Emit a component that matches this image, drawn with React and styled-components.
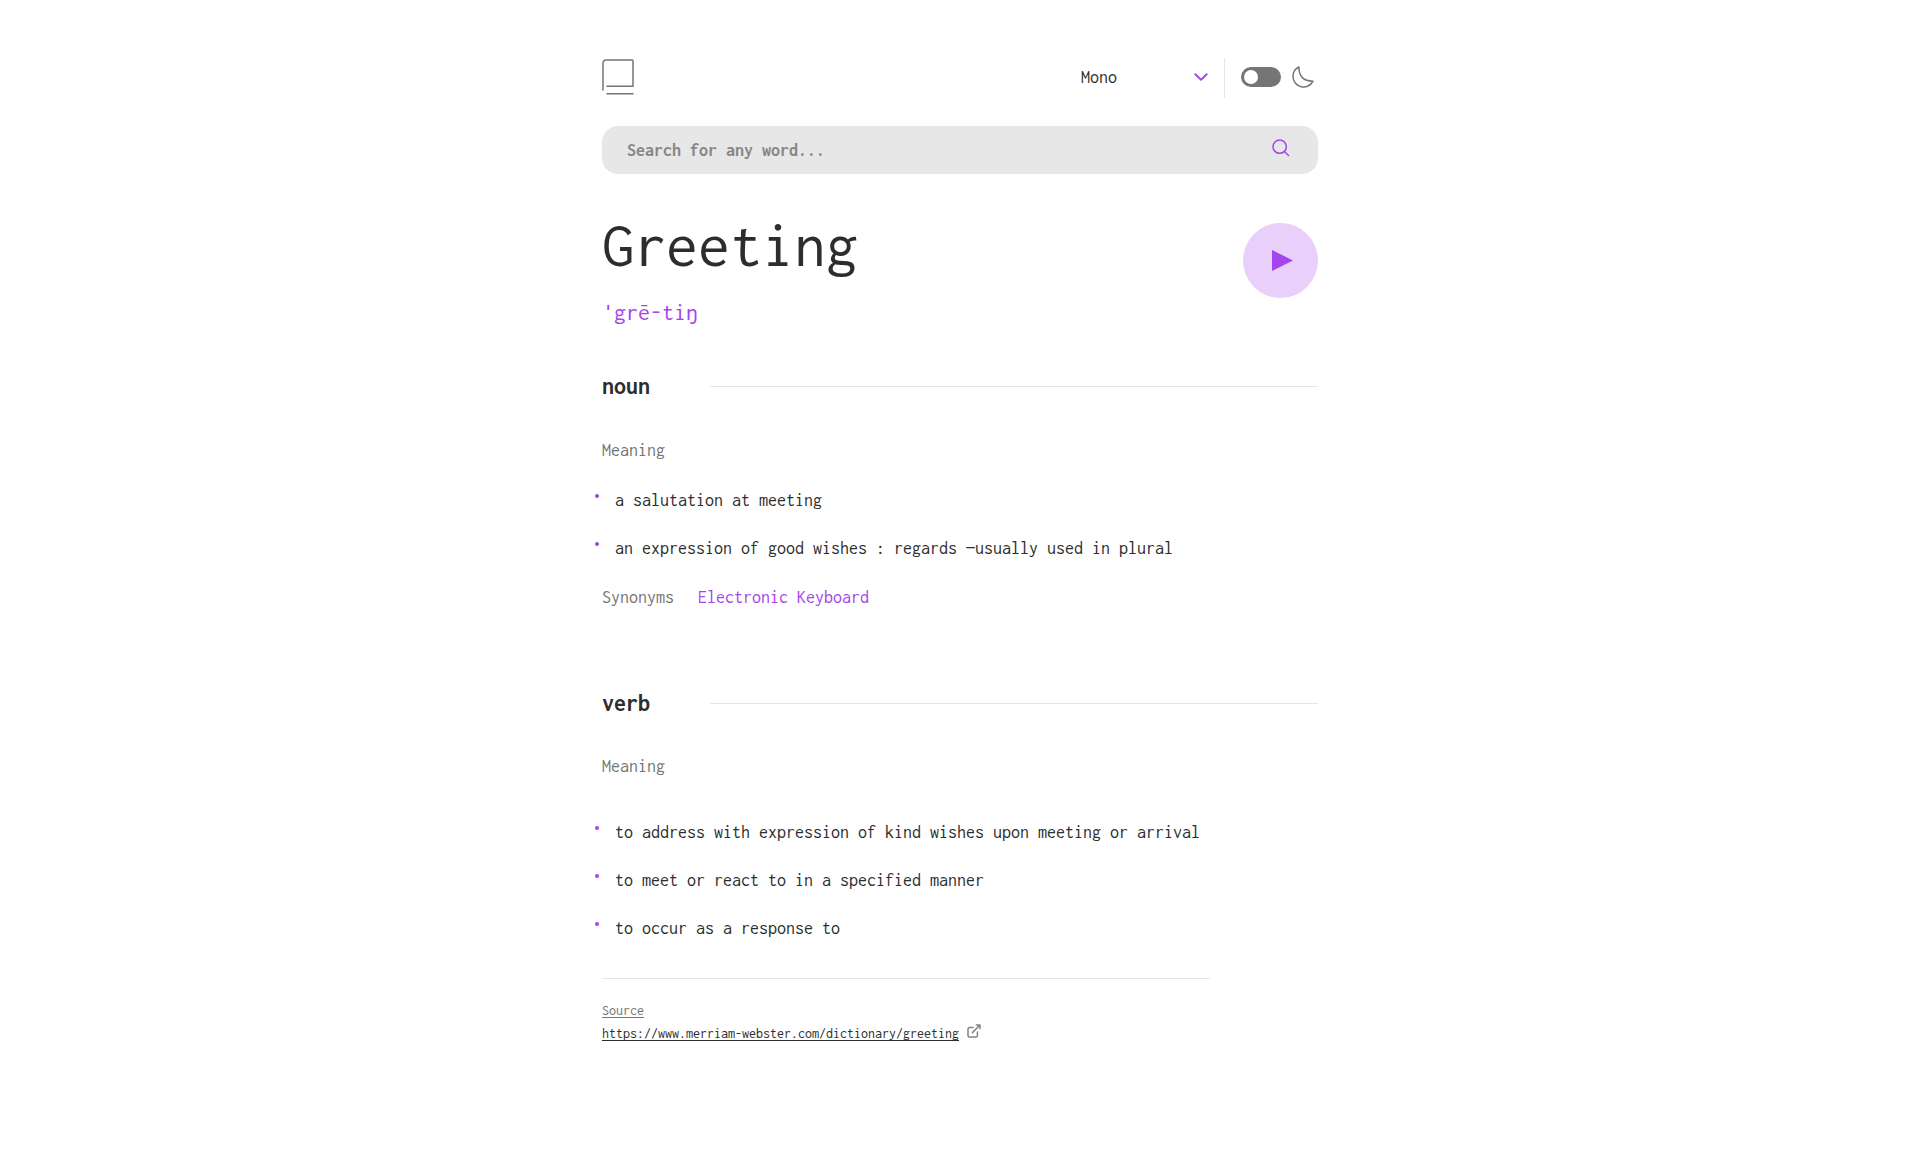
import React, { useState } from "react";
import styled, { createGlobalStyle } from "styled-components";

const GlobalStyle = createGlobalStyle`
  *, *::before, *::after { box-sizing: border-box; }
  body {
    margin: 0;
    background: #fff;
    color: #2d2d2d;
    font-family: Inconsolata, "Noto Sans Mono CJK SC", "Liberation Mono", monospace;
    font-size: 18px;
    line-height: 18px;
  }
  h1, h2, h3, p, ul { margin: 0; padding: 0; font-weight: 400; }
`;

const Page = styled.main`
  width: 716px;
  margin: 0 auto;
  padding: 58px 0 100px;
`;

const Header = styled.header`
  display: flex;
  justify-content: space-between;
  height: 40px;
`;

const LogoBox = styled.div`
  padding-top: 1px;
`;

const Controls = styled.div`
  display: flex;
  height: 38px;
  align-items: center;
  padding-right: 4px;
`;

const FontSelect = styled.button`
  display: flex;
  align-items: center;
  justify-content: space-between;
  width: 127px;
  padding: 0;
  border: 0;
  background: none;
  color: inherit;
  font: inherit;
`;

const Divider = styled.span`
  width: 1px;
  height: 40px;
  align-self: flex-start;
  margin: 0 16px;
  background: #e5e5e5;
`;

const Toggle = styled.button`
  display: flex;
  align-items: center;
  justify-content: ${(p) => (p.$on ? "flex-end" : "flex-start")};
  width: 40px;
  height: 20px;
  margin-right: 11px;
  padding: 0 3px;
  border: 0;
  border-radius: 10px;
  background: ${(p) => (p.$on ? "#a445ed" : "#757575")};
`;

const Knob = styled.span`
  width: 14px;
  height: 14px;
  border-radius: 50%;
  background: #fff;
`;

const SearchBar = styled.form`
  display: flex;
  height: 48px;
  margin-top: 28px;
  padding: 0 28px 0 25px;
  border-radius: 16px;
  background: #e7e7e7;
`;

const SearchInput = styled.input`
  flex: 1;
  padding: 0;
  border: 0;
  outline: 0;
  background: none;
  color: #2d2d2d;
  font: inherit;
  font-weight: 700;
  &::placeholder { color: #868686; opacity: 1; }
`;

const SearchButton = styled.button`
  display: flex;
  align-self: flex-start;
  margin-top: 13px;
  padding: 0;
  border: 0;
  background: none;
`;

const WordRow = styled.section`
  display: flex;
  justify-content: space-between;
  align-items: flex-start;
  margin-top: 37px;
`;

const Word = styled.h1`
  && { font-size: 64px; line-height: 67px; }
`;

const Phonetic = styled.p`
  && { margin-top: 21px; }
  color: #a445ed;
  font-size: 24px;
  line-height: 26px;
`;

const PlayButton = styled.button`
  display: flex;
  margin-top: 12px;
  padding: 0;
  border: 0;
  background: none;
`;

const Entry = styled.section`
  margin-top: ${(p) => p.$top}px;
`;

const PartRow = styled.div`
  display: flex;
  align-items: center;
  height: 26px;
`;

const Part = styled.h2`
  && { width: 108px; font-size: 24px; line-height: 26px; font-weight: 700; }
`;

const Rule = styled.span`
  flex: 1;
  height: 1px;
  background: #e5e5e5;
`;

const Label = styled.h3`
  && { margin-top: ${(p) => p.$top || 0}px; font-size: 18px; }
  color: #757575;
`;

const Meanings = styled.ul`
  && { margin: ${(p) => p.$top}px 0 0 -7px; }
  display: flex;
  flex-direction: column;
  gap: 30px;
  list-style: none;
`;

const Meaning = styled.li`
  display: flex;
  gap: 16px;
  &::before {
    content: "";
    width: 4px;
    height: 4px;
    margin-top: 3px;
    border-radius: 50%;
    background: #a445ed;
  }
`;

const Synonyms = styled.div`
  display: flex;
  gap: 24px;
  margin-top: 31px;
`;

const Synonym = styled.span`
  color: #a445ed;
`;

const Footer = styled.footer`
  width: 608px;
  margin-top: 41px;
  padding-top: 25px;
  border-top: 1px solid #e5e5e5;
  font-size: 14px;
  line-height: 14px;
  text-underline-offset: 2px;
`;

const SourceLabel = styled.p`
  color: #757575;
  text-decoration: underline;
`;

const SourceRow = styled.div`
  display: flex;
  align-items: flex-start;
  gap: 8px;
  margin-top: 6px;
`;

const SourceLink = styled.a`
  margin-top: 3px;
  color: #2d2d2d;
  text-decoration: underline;
`;

const Icon = styled.svg`
  display: block;
  flex: none;
  overflow: visible;
  fill: none;
  stroke: ${(p) => p.$color};
  stroke-width: ${(p) => p.$weight || 1.5};
  stroke-linecap: round;
  stroke-linejoin: round;
`;

const entries = [
  {
    part: "noun",
    top: 48,
    labelTop: 42,
    listTop: 32,
    meanings: [
      "a salutation at meeting",
      "an expression of good wishes : regards —usually used in plural",
    ],
    synonyms: "Electronic Keyboard",
  },
  {
    part: "verb",
    top: 84,
    labelTop: 41,
    listTop: 48,
    meanings: [
      "to address with expression of kind wishes upon meeting or arrival",
      "to meet or react to in a specified manner",
      "to occur as a response to",
    ],
  },
];

export default function App() {
  const [dark, setDark] = useState(false);
  return (
    <>
      <GlobalStyle />
      <Page>
        <Header>
          <LogoBox>
            <Icon $color="#757575" width="32" height="36" viewBox="0 0 32 36">
              <path d="M1 31V4a3 3 0 0 1 3-3h26a1 1 0 0 1 1 1v25.2H5M5 34.8h26" />
            </Icon>
          </LogoBox>
          <Controls>
            <FontSelect type="button">
              Mono
              <Icon $color="#a445ed" $weight={1.9} width="14" height="8" viewBox="0 0 14 8">
                <path d="m1.3 1.2 5.7 5.6 5.7-5.6" />
              </Icon>
            </FontSelect>
            <Divider />
            <Toggle type="button" $on={dark} onClick={() => setDark(!dark)}>
              <Knob />
            </Toggle>
            <Icon $color="#757575" width="22" height="22" viewBox="0 0 22 22">
              <path d="M1 10.449a10.544 10.544 0 0 0 19.993 4.686C11.544 15.135 6.858 10.448 6.858 1A10.545 10.545 0 0 0 1 10.449Z" />
            </Icon>
          </Controls>
        </Header>

        <SearchBar onSubmit={(e) => e.preventDefault()}>
          <SearchInput placeholder="Search for any word..." />
          <SearchButton type="submit">
            <Icon $color="#a445ed" width="18" height="18" viewBox="0 0 18 18">
              <path d="m12.663 12.663 3.887 3.887M1 7.664a6.665 6.665 0 1 0 13.33 0 6.665 6.665 0 0 0-13.33 0Z" />
            </Icon>
          </SearchButton>
        </SearchBar>

        <WordRow>
          <div>
            <Word>Greeting</Word>
            <Phonetic>ˈgrē-tiŋ</Phonetic>
          </div>
          <PlayButton type="button">
            <svg width="75" height="75" viewBox="0 0 75 75" fill="#a445ed">
              <circle cx="37.5" cy="37.5" r="37.5" opacity=".25" />
              <path d="M29 27v21l21-10.5z" />
            </svg>
          </PlayButton>
        </WordRow>

        {entries.map((e) => (
          <Entry key={e.part} $top={e.top}>
            <PartRow>
              <Part>{e.part}</Part>
              <Rule />
            </PartRow>
            <Label $top={e.labelTop}>Meaning</Label>
            <Meanings $top={e.listTop}>
              {e.meanings.map((m) => (
                <Meaning key={m}>{m}</Meaning>
              ))}
            </Meanings>
            {e.synonyms && (
              <Synonyms>
                <Label>Synonyms</Label>
                <Synonym>{e.synonyms}</Synonym>
              </Synonyms>
            )}
          </Entry>
        ))}

        <Footer>
          <SourceLabel>Source</SourceLabel>
          <SourceRow>
            <SourceLink>https://www.merriam-webster.com/dictionary/greeting</SourceLink>
            <Icon $color="#838383" width="14" height="14" viewBox="0 0 14 14">
              <path d="M6.09 3.545H2.456A1.455 1.455 0 0 0 1 5v6.545A1.455 1.455 0 0 0 2.455 13H9a1.455 1.455 0 0 0 1.455-1.455V7.91m-5.091.727L13 1m0 0H9.364M13 1v3.636" />
            </Icon>
          </SourceRow>
        </Footer>
      </Page>
    </>
  );
}
